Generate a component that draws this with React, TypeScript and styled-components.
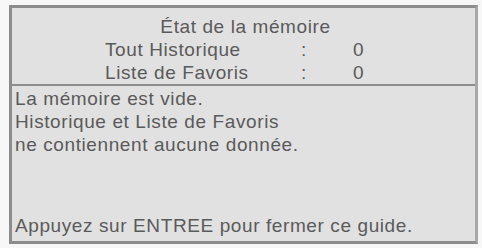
import React from 'react';
import styled, { createGlobalStyle } from 'styled-components';

const Global = createGlobalStyle`
    html, body {
        margin: 0;
        padding: 0;
        background: #f7f7f7;
    }
    body {
        font-family: "Liberation Sans", Arial, sans-serif;
    }
`;

const Page = styled.div`
    width: 482px;
    height: 248px;
    padding: 5px 4px 4px 9px;
    box-sizing: border-box;
`;

const Frame = styled.div`
    width: 469px;
    height: 239px;
    box-sizing: border-box;
    border: 3px solid #8c8c8c;
    border-right-color: #a8a8a8;
    background: #e1e1e1;
    display: flex;
    flex-direction: column;
    color: #5a5a5a;
    font-size: 19px;
    letter-spacing: 0.6px;
    line-height: 23px;
`;

const Header = styled.div`
    height: 78px;
    box-sizing: border-box;
    padding-top: 7px;
    border-bottom: 2px solid #8c8c8c;
    display: flex;
    flex-direction: column;
`;

const Title = styled.div`
    text-align: center;
    padding-left: 4px;
`;

const Stats = styled.div`
    display: grid;
    grid-template-columns: 196px 52px auto;
    margin-left: 93px;
`;

const Body = styled.div`
    flex: 1;
    padding: 1px 3px 4px;
    display: flex;
    flex-direction: column;
`;

const Line = styled.div<{ $last?: boolean }>`
    margin-top: ${(p) => (p.$last ? 'auto' : '0')};
`;

const stats = [
    { label: 'Tout Historique', value: 0 },
    { label: 'Liste de Favoris', value: 0 },
];

export default function App() {
    return (
        <>
            <Global />
            <Page>
                <Frame>
                    <Header>
                        <Title>État de la mémoire</Title>
                        <Stats>
                            {stats.map((s) => (
                                <React.Fragment key={s.label}>
                                    <span>{s.label}</span>
                                    <span>:</span>
                                    <span>{s.value}</span>
                                </React.Fragment>
                            ))}
                        </Stats>
                    </Header>
                    <Body>
                        <Line>La mémoire est vide.</Line>
                        <Line>Historique et Liste de Favoris</Line>
                        <Line>ne contiennent aucune donnée.</Line>
                        <Line $last>Appuyez sur ENTREE pour fermer ce guide.</Line>
                    </Body>
                </Frame>
            </Page>
        </>
    );
}
